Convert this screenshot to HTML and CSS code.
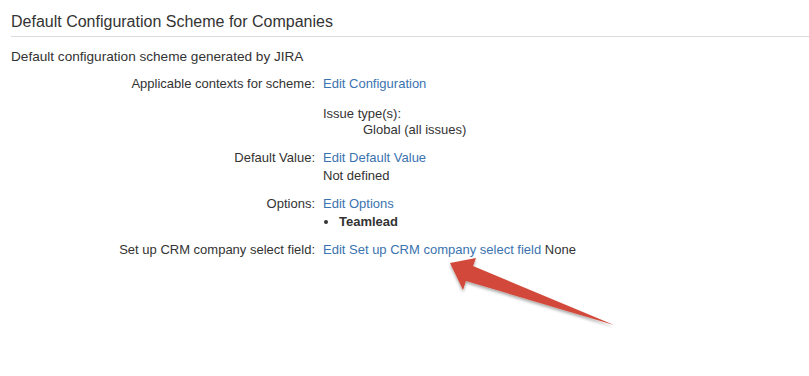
FILE: index.html
```html
<!DOCTYPE html>
<html lang="en">
<head>
  <meta charset="UTF-8" />
  <meta name="viewport" content="width=device-width, initial-scale=1.0" />
  <title>Default Configuration Scheme for Companies</title>
  <link rel="stylesheet" href="styles.css">
</head>
<body>
  <main class="scheme">
    <h2>Default Configuration Scheme for Companies</h2>
    <p class="desc">Default configuration scheme generated by JIRA</p>

    <div class="field-row">
      <div class="label">Applicable contexts for scheme:</div>
      <div class="value">
        <a href="#">Edit Configuration</a>
        <div class="issue-types">
          <div>Issue type(s):</div>
          <div class="indent">Global (all issues)</div>
        </div>
      </div>
    </div>

    <div class="field-row">
      <div class="label">Default Value:</div>
      <div class="value">
        <a href="#">Edit Default Value</a>
        <div>Not defined</div>
      </div>
    </div>

    <div class="field-row">
      <div class="label">Options:</div>
      <div class="value">
        <a href="#">Edit Options</a>
        <ul>
          <li><strong>Teamlead</strong></li>
        </ul>
      </div>
    </div>

    <div class="field-row">
      <div class="label">Set up CRM company select field:</div>
      <div class="value">
        <a href="#">Edit Set up CRM company select field</a> None
      </div>
    </div>
  </main>

  <!-- flecha roja encima del enlace -->
  <svg class="arrow" width="809" height="376" viewBox="0 0 809 376">
    <defs>
      <filter id="sombra" x="-10%" y="-10%" width="120%" height="130%">
        <feDropShadow dx="0" dy="2" stdDeviation="1.5" flood-color="#000" flood-opacity="0.35"/>
      </filter>
    </defs>
    <polygon points="450,263 476,258 473,266 614,325 466,281 463,290" fill="#d24a3a" filter="url(#sombra)"/>
  </svg>
</body>
</html>
```

FILE: styles.css
```css
body {
  font-family: "Liberation Sans", Arial, sans-serif;
  font-size: 13px;
  line-height: 18px;
  color: #333;
  background-color: #fff;
  margin: 0;
  padding: 0;
}

.scheme {
  padding: 12px 0 0 11px;
}

.scheme h2 {
  margin: 0;
  font-size: 16px;
  font-weight: normal;
  line-height: 20px;
  padding-bottom: 4px;
  border-bottom: 1px solid #dcdcdc;
}

.desc {
  margin: 11px 0 9px 0;
  font-size: 13.6px;
}

.field-row {
  display: grid;
  grid-template-columns: 304px 1fr;
  column-gap: 8px;
  margin-bottom: 10px;
}

.label {
  text-align: right;
}

.value a {
  color: #3b73af;
  text-decoration: none;
}

.issue-types {
  margin: 13px 0 1px 0;
  line-height: 16px;
}

.indent {
  padding-left: 40px;
}

.value ul {
  margin: 0;
  padding-left: 16px;
}

.arrow {
  position: absolute;
  left: 0;
  top: 0;
  pointer-events: none;
}
```
